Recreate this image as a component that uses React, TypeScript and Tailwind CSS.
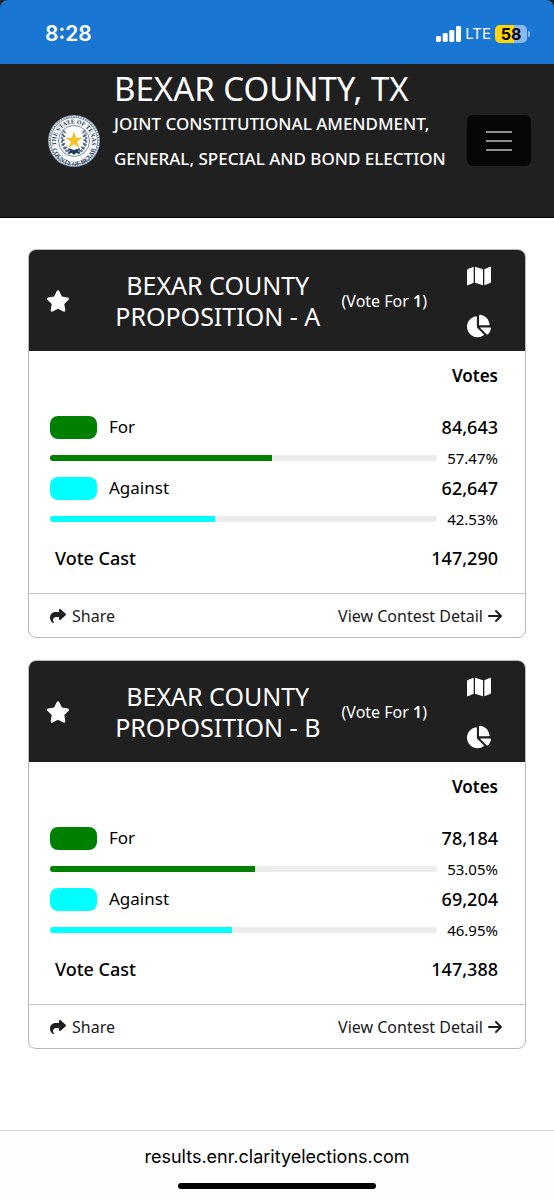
import { FaChartPie, FaMap } from 'react-icons/fa';
import { FaArrowRight, FaShare, FaStar } from 'react-icons/fa6';

interface Choice {
    name: string;
    votes: string;
    percent: number;
    color: string;
}

interface Contest {
    title: string;
    total: string;
    choices: Choice[];
}

const contests: Contest[] = [
    {
        title: 'BEXAR COUNTY PROPOSITION - A',
        total: '147,290',
        choices: [
            { name: 'For', votes: '84,643', percent: 57.47, color: 'bg-[#008000]' },
            { name: 'Against', votes: '62,647', percent: 42.53, color: 'bg-[#00ffff]' },
        ],
    },
    {
        title: 'BEXAR COUNTY PROPOSITION - B',
        total: '147,388',
        choices: [
            { name: 'For', votes: '78,184', percent: 53.05, color: 'bg-[#008000]' },
            { name: 'Against', votes: '69,204', percent: 46.95, color: 'bg-[#00ffff]' },
        ],
    },
];

const StatusBar = () => (
    <div className="bg-[#202020]">
        <div className="flex h-16 items-center justify-between rounded-t-lg bg-[#1976d2] pt-[3px] pr-6 pl-[45px] font-['Inter',sans-serif] text-white">
            <time className="text-[21px] font-semibold">8:28</time>
            <div className="flex items-center gap-1">
                <svg width="25" height="16" viewBox="0 0 25 16" fill="currentColor" aria-hidden="true">
                    <rect x="0" y="10" width="5" height="6" rx="1.4" />
                    <rect x="6.7" y="7" width="5" height="9" rx="1.4" />
                    <rect x="13.3" y="4" width="5" height="12" rx="1.4" />
                    <rect x="20" y="0" width="5" height="16" rx="1.4" />
                </svg>
                <span className="text-[15px] leading-4">LTE</span>
                <div className="flex items-center gap-px">
                    <span className="flex h-[18px] w-8 items-center justify-center rounded-[5px] bg-linear-to-r from-[#fdd50b] from-58% to-[#8bbaea] to-58% text-base font-bold text-black">
                        58
                    </span>
                    <span className="h-[6px] w-[2px] rounded-r-full bg-[#8bbaea]" />
                </div>
            </div>
        </div>
    </div>
);

const CountySeal = () => (
    <svg className="size-[52px] shrink-0" viewBox="0 0 104 104" role="img" aria-label="County seal">
        <defs>
            <path id="seal-top" d="M 18 65 A 36 36 0 1 1 86 65" />
            <path id="seal-bottom" d="M 8 57 A 44 44 0 0 0 96 57" />
        </defs>
        <circle cx="52" cy="52" r="52" fill="#8496a8" />
        <circle cx="52" cy="52" r="49" fill="none" stroke="#dbe3ea" strokeWidth="3" strokeDasharray="3 2" />
        <circle cx="52" cy="52" r="46" fill="#f7f9fa" />
        <circle cx="52" cy="52" r="31" fill="#fff" stroke="#7e91a5" strokeWidth="2" />
        {/* wreath */}
        <path d="M45 77 C27 68 23 48 33 31 M59 77 C77 68 81 48 71 31" fill="none" stroke="#6f849a" strokeWidth="5" strokeDasharray="5 2" />
        <path d="M42 72 C31 64 27 50 35 35 M62 72 C73 64 77 50 69 35" fill="none" stroke="#345171" strokeWidth="5" strokeDasharray="3 5" />
        <path d="M40 66 L52 70 L64 66 L60 72 L65 77 L56 76 L52 80 L48 76 L39 77 L44 72 Z" fill="#1f3b5a" />
        <path d="M52 34 L56 46 L68 46 L58 53 L62 65 L52 58 L42 65 L46 53 L36 46 L48 46 Z" fill="#f5c52c" stroke="#e8b92a" strokeWidth="1" />
        <g fill="#1f3b5a" fontFamily="'Liberation Serif', serif" fontWeight="700" fontSize="12">
            <text textAnchor="middle">
                <textPath href="#seal-top" startOffset="50%">THE STATE OF TEXAS</textPath>
            </text>
            <text textAnchor="middle">
                <textPath href="#seal-bottom" startOffset="50%">COUNTY OF BEXAR</textPath>
            </text>
        </g>
    </svg>
);

const SiteHeader = () => (
    <header className="flex h-[154px] items-center border-b border-black bg-[#202020] pr-[23px] pl-12 text-white">
        <CountySeal />
        <div className="mb-[34px] ml-[14px] flex-1">
            <h1 className="text-[33px] leading-[34px]">BEXAR COUNTY, TX</h1>
            <p className="text-[17px] leading-[35px] font-medium">
                JOINT CONSTITUTIONAL AMENDMENT, GENERAL, SPECIAL AND BOND ELECTION
            </p>
        </div>
        <button
            type="button"
            aria-label="Menu"
            className="flex h-[51px] w-16 shrink-0 flex-col items-center justify-center gap-[7px] rounded-md bg-[#060606]"
        >
            <span className="h-[2px] w-[26px] bg-[#8e8e8e]" />
            <span className="h-[2px] w-[26px] bg-[#8e8e8e]" />
            <span className="h-[2px] w-[26px] bg-[#8e8e8e]" />
        </button>
    </header>
);

const ChoiceRows = ({ choice }: { choice: Choice }) => (
    <>
        <tr className="h-[34px]">
            <th scope="row" className="text-left font-normal">
                <span className="flex items-center gap-3">
                    <span className={`h-[23px] w-[47px] rounded-lg ${choice.color}`} />
                    {choice.name}
                </span>
            </th>
            <td colSpan={2} className="text-right text-lg leading-6 font-medium">{choice.votes}</td>
        </tr>
        <tr className="h-[27px]">
            <td colSpan={2}>
                <div
                    role="progressbar"
                    aria-label={choice.name}
                    aria-valuenow={choice.percent}
                    className="h-[6px] overflow-hidden rounded-full bg-[#ececec]"
                >
                    <div className={`h-full ${choice.color}`} style={{ width: `${choice.percent}%` }} />
                </div>
            </td>
            <td className="text-right text-[15px]">{choice.percent}%</td>
        </tr>
    </>
);

const ContestCard = ({ contest }: { contest: Contest }) => (
    <section className="overflow-hidden rounded-lg border border-[#b9b9b9] bg-white">
        <div className="flex h-[101px] items-center bg-[#202020] pr-[34px] pl-[17px] text-white">
            <button type="button" aria-label="Add to favorites">
                <FaStar className="size-6" />
            </button>
            <h2 className="ml-6 flex-1 px-4 text-center text-[25px] leading-[31px]">{contest.title}</h2>
            <p className="text-base">
                (Vote For <span className="font-semibold">1</span>)
            </p>
            <div className="ml-10 flex flex-col items-center gap-[26px]">
                <button type="button" aria-label="Map">
                    <FaMap className="size-6" />
                </button>
                <button type="button" aria-label="Chart">
                    <FaChartPie className="size-6" />
                </button>
            </div>
        </div>
        <div className="pr-[27px] pb-[10px] pl-[21px]">
            <table className="w-full table-fixed text-[17px] leading-6 text-black">
                <colgroup>
                    <col />
                    <col className="w-[10px]" />
                    <col className="w-[61px]" />
                </colgroup>
                <thead>
                    <tr className="h-[59px]">
                        <td />
                        <th colSpan={2} scope="col" className="pt-[13px] text-right align-top font-semibold">Votes</th>
                    </tr>
                </thead>
                <tbody>
                    {contest.choices.map((choice) => (
                        <ChoiceRows key={choice.name} choice={choice} />
                    ))}
                </tbody>
                <tfoot>
                    <tr className="h-[51px] text-lg leading-6">
                        <th scope="row" className="pl-[5px] text-left font-medium">Vote Cast</th>
                        <td colSpan={2} className="text-right font-medium">{contest.total}</td>
                    </tr>
                </tfoot>
            </table>
        </div>
        <div className="flex h-11 items-center justify-between border-t border-[#c4c4c4] pr-[22px] pl-[21px] text-base text-[#202020]">
            <button type="button" className="flex items-center gap-[6px]">
                <FaShare className="size-4" />
                Share
            </button>
            <a href="#detail" className="flex items-center gap-1">
                View Contest Detail
                <FaArrowRight className="size-4" />
            </a>
        </div>
    </section>
);

export default function App() {
    return (
        <div className="flex min-h-screen flex-col bg-white font-['Noto_Sans',sans-serif]">
            <StatusBar />
            <SiteHeader />
            <main className="flex flex-1 flex-col gap-[22px] px-7 pt-[31px] pb-20">
                {contests.map((contest) => (
                    <ContestCard key={contest.title} contest={contest} />
                ))}
            </main>
            <footer className="flex h-[70px] flex-col items-center justify-between border-t border-[#d8d8d8] bg-[#fdfdfd] pt-[14px] pb-[11px] font-['Inter',sans-serif]">
                <p className="text-lg leading-6 text-black">results.enr.clarityelections.com</p>
                <div className="h-[6px] w-[198px] rounded-full bg-black" />
            </footer>
        </div>
    );
}
